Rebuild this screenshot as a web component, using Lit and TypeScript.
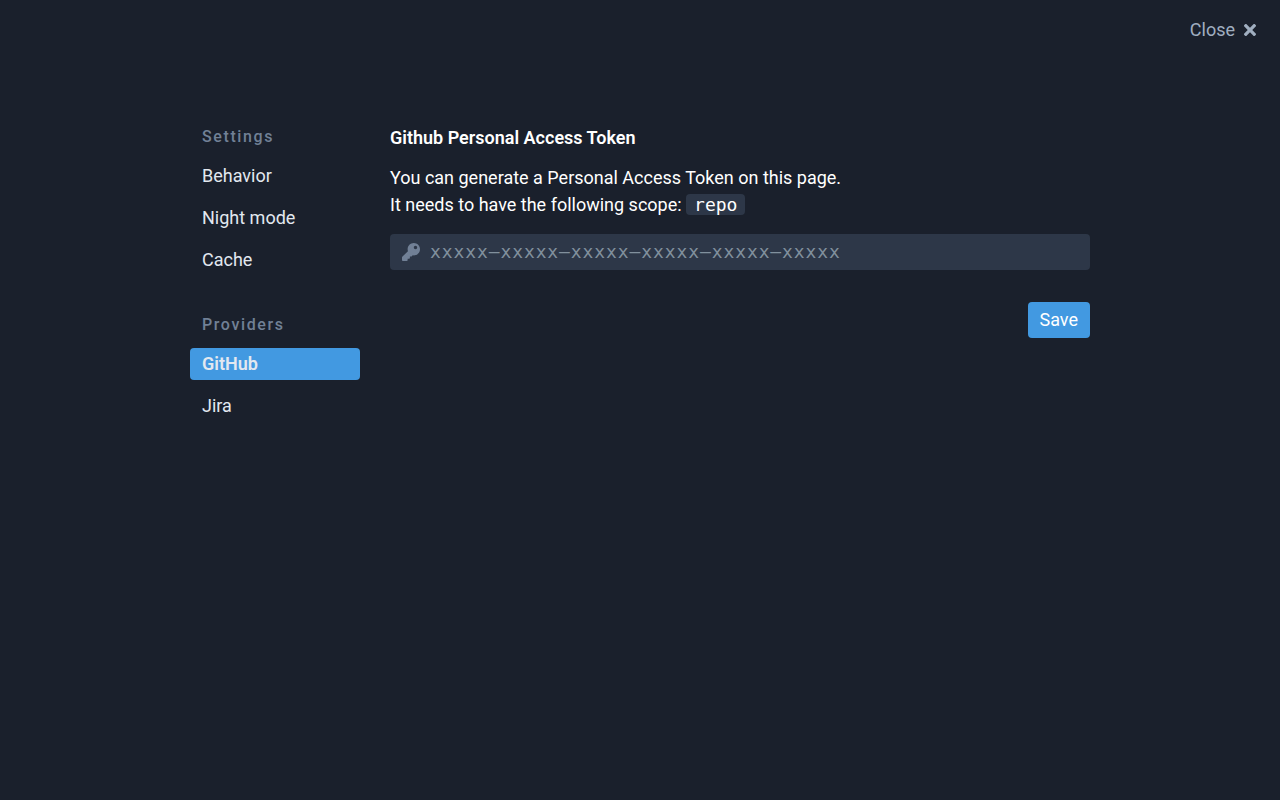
import { LitElement, html, css } from "lit";
import { customElement, property, state } from "lit/decorators.js";
import { classMap } from "lit/directives/class-map.js";

interface Section {
  title: string;
  items: string[];
}

const SECTIONS: Section[] = [
  { title: "Settings", items: ["Behavior", "Night mode", "Cache"] },
  { title: "Providers", items: ["GitHub", "Jira"] },
];

@customElement("settings-nav")
class SettingsNav extends LitElement {
  @property() active = "GitHub";

  static styles = css`
    :host {
      display: block;
    }
    .section + .section {
      margin-top: 36px;
    }
    .heading {
      margin: 0 0 10px;
      padding: 0 12px;
      font-size: 16px;
      line-height: 26px;
      font-weight: 500;
      letter-spacing: 0.1em;
      color: #718096;
    }
    .list {
      display: flex;
      flex-direction: column;
      gap: 10px;
      margin: 0;
      padding: 0;
      list-style: none;
    }
    .item {
      display: block;
      padding: 0 12px;
      line-height: 32px;
      border-radius: 4px;
      color: #e2e8f0;
      text-decoration: none;
    }
    .active {
      background: #4299e1;
      font-weight: 600;
    }
  `;

  render() {
    return html`<nav>
      ${SECTIONS.map(
        (section) => html`<section class="section">
          <h2 class="heading">${section.title}</h2>
          <ul class="list">
            ${section.items.map(
              (item) => html`<li>
                <a class=${classMap({ item: true, active: item === this.active })} href="#">${item}</a>
              </li>`
            )}
          </ul>
        </section>`
      )}
    </nav>`;
  }
}

@customElement("token-form")
class TokenForm extends LitElement {
  @state() private token = "";

  static styles = css`
    :host {
      display: block;
    }
    .title {
      display: block;
      font-weight: 600;
    }
    .help {
      margin: 13px 0 16px;
    }
    .scope {
      padding: 0 8px;
      border-radius: 4px;
      background: #2d3748;
      font-family: "DejaVu Sans Mono", monospace;
      font-size: 18px;
    }
    .field {
      display: flex;
      align-items: center;
      gap: 10px;
      height: 36px;
      padding: 0 12px;
      border-radius: 4px;
      background: #2d3748;
    }
    .key {
      flex: none;
      width: 18px;
      height: 18px;
      fill: #718096;
    }
    .input {
      flex: 1;
      box-sizing: border-box;
      min-width: 0;
      height: 36px;
      padding: 0 0 2px;
      border: 0;
      outline: 0;
      background: transparent;
      color: #fff;
      font-family: "DejaVu Sans Mono", monospace;
      font-size: 18px;
      letter-spacing: 0.05em;
    }
    .input::placeholder {
      color: #81909d;
      opacity: 1;
    }
    .actions {
      display: flex;
      justify-content: flex-end;
      margin-top: 32px;
    }
    .save {
      height: 36px;
      padding: 0 12px 1px;
      border: 0;
      border-radius: 4px;
      background: #4299e1;
      color: #fff;
      font: inherit;
    }
  `;

  private onInput(event: Event) {
    this.token = (event.target as HTMLInputElement).value;
  }

  render() {
    return html`<form>
      <label class="title" for="token">Github Personal Access Token</label>
      <p class="help">
        You can generate a Personal Access Token on this page.<br />
        It needs to have the following scope: <code class="scope">repo</code>
      </p>
      <div class="field">
        <svg class="key" viewBox="0 0 512 512" aria-hidden="true">
          <path
            d="M512 176.001C512 273.203 433.202 352 336 352c-11.22 0-22.19-1.062-32.827-3.069l-24.012 27.014A23.999 23.999 0 0 1 261.223 384H224v40c0 13.255-10.745 24-24 24h-40v40c0 13.255-10.745 24-24 24H24c-13.255 0-24-10.745-24-24v-78.059c0-6.365 2.529-12.47 7.029-16.971l161.802-161.802C163.108 213.814 160 195.271 160 176 160 78.798 238.797.001 335.999 0 433.488-.001 512 78.511 512 176.001zM336 128c0 26.51 21.49 48 48 48s48-21.49 48-48-21.49-48-48-48-48 21.49-48 48z"
          />
        </svg>
        <input
          class="input"
          id="token"
          type="text"
          placeholder="xxxxx–xxxxx–xxxxx–xxxxx–xxxxx–xxxxx"
          .value=${this.token}
          @input=${this.onInput}
        />
      </div>
      <div class="actions"><button class="save" type="button">Save</button></div>
    </form>`;
  }
}

@customElement("app-root")
class AppRoot extends LitElement {
  static styles = css`
    :host {
      display: block;
      box-sizing: border-box;
      min-height: 100vh;
      background: #1a202c;
      color: #fff;
      font-family: Roboto, sans-serif;
      font-size: 18px;
      line-height: 27px;
    }
    .top {
      display: flex;
      justify-content: flex-end;
      padding: 16px 24px 0;
    }
    .close {
      display: flex;
      align-items: center;
      gap: 9px;
      padding: 0;
      border: 0;
      background: none;
      color: #a0aec0;
      font: inherit;
    }
    .cross {
      width: 12px;
      height: 18px;
      fill: currentColor;
    }
    .layout {
      display: grid;
      grid-template-columns: 170px minmax(0, 1fr);
      gap: 30px;
      max-width: 900px;
      margin: 0 auto;
      padding-top: 81px;
    }
  `;

  render() {
    return html`<header class="top">
        <button class="close" type="button">
          Close
          <svg class="cross" viewBox="0 0 352 512" aria-hidden="true">
            <path
              d="M242.72 256l100.07-100.07c12.28-12.28 12.28-32.19 0-44.48l-22.24-22.24c-12.28-12.28-32.19-12.28-44.48 0L176 189.28 75.93 89.21c-12.28-12.28-32.19-12.28-44.48 0L9.21 111.45c-12.28 12.28-12.28 32.19 0 44.48L109.28 256 9.21 356.07c-12.28 12.28-12.28 32.19 0 44.48l22.24 22.24c12.28 12.28 32.2 12.28 44.48 0L176 322.72l100.07 100.07c12.28 12.28 32.2 12.28 44.48 0l22.24-22.24c12.28-12.28 12.28-32.19 0-44.48L242.72 256z"
            />
          </svg>
        </button>
      </header>
      <main class="layout">
        <settings-nav active="GitHub"></settings-nav>
        <token-form></token-form>
      </main>`;
  }
}
